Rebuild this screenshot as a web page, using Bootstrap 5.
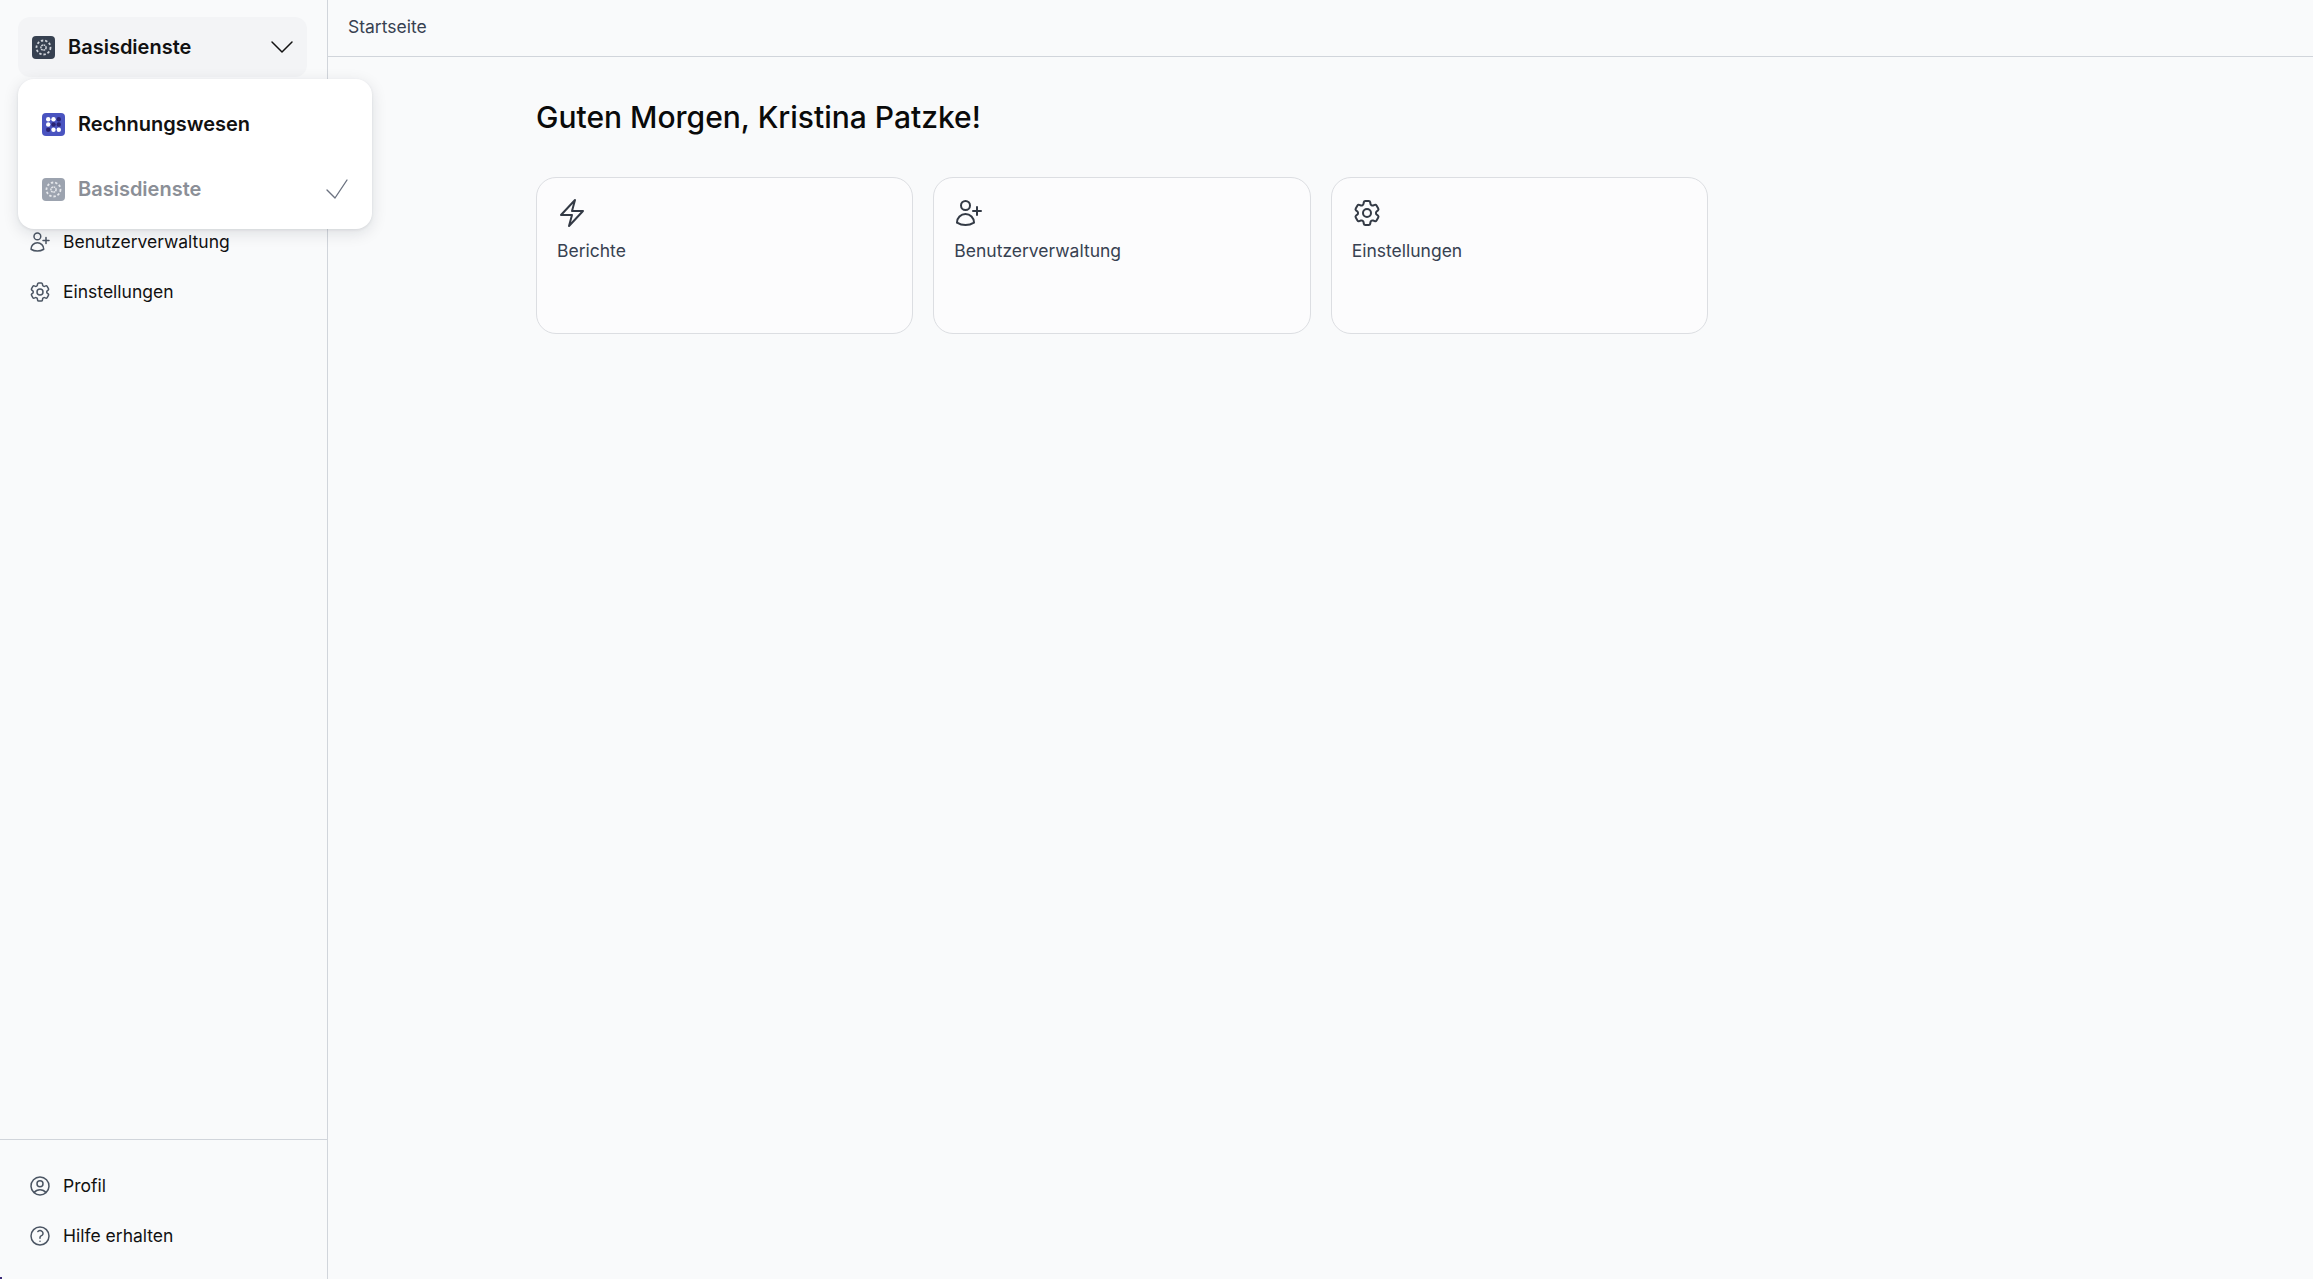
<!DOCTYPE html>
<html lang="de">
<head>
  <meta charset="UTF-8" />
  <meta name="viewport" content="width=device-width, initial-scale=1" />
  <title>Startseite</title>
  <link href="https://cdn.jsdelivr.net/npm/bootstrap@5.3.0/dist/css/bootstrap.min.css" rel="stylesheet" />
  <style>
    body {
      background-color: #f9fafb;
      font-family: Inter, "Liberation Sans", sans-serif;
      color: #111;
      height: 1279px;
      overflow: hidden;
    }
    .line-icon {
      fill: none;
      stroke: currentColor;
      stroke-width: 1.5;
      stroke-linecap: round;
      stroke-linejoin: round;
      flex: none;
    }
    .app-side {
      width: 328px;
      height: 1279px;
      border-right: 1px solid #d1d5db;
    }
    .side-top {
      padding: 17px 20px 0 18px;
    }
    .app-switch {
      height: 60px;
      width: 289px;
      background-color: #f3f4f6;
      border-radius: 12px;
      padding: 0 9px 0 14px;
      font-size: 20px;
      font-weight: 600;
    }
    .app-switch .line-icon {
      stroke-width: 1.1;
    }
    .switch-label {
      gap: 13px;
    }
    .app-tile {
      width: 23px;
      height: 23px;
      border-radius: 4px;
      flex: none;
    }
    .tile-dark { background-color: #374151; }
    .tile-blue { background-color: #4a54c0; }
    .tile-grey { background-color: #9ca3af; }
    .app-menu {
      position: absolute;
      top: 79px;
      left: 18px;
      width: 354px;
      height: 150px;
      background-color: #fff;
      border-radius: 16px;
      box-shadow: 0 4px 16px rgba(17, 24, 39, .12), 0 1px 3px rgba(17, 24, 39, .08);
      z-index: 10;
      padding: 14px 0;
    }
    .app-option {
      height: 62px;
      padding: 0 19px 0 24px;
      margin-bottom: 3px;
      font-size: 20px;
      font-weight: 600;
      gap: 13px;
    }
    .app-option.is-active { color: #8b8f97; }
    .app-option .line-icon {
      stroke-width: 1;
      color: #6b7280;
    }
    .side-nav {
      padding: 140px 12px 0 28px;
    }
    .side-link {
      height: 50px;
      gap: 11px;
      font-size: 17.5px;
      color: #111;
      text-decoration: none;
    }
    .side-link .line-icon {
      color: #4b5563;
    }
    .side-foot {
      border-top: 1px solid #d1d5db;
      padding-top: 21px;
      height: 140px;
    }
    .top-bar {
      height: 57px;
      border-bottom: 1px solid #d1d5db;
      padding: 0 0 2px 20px;
      font-size: 17.5px;
      color: #374151;
    }
    .home-body {
      padding: 41px 0 0 208px;
    }
    .home-title {
      font-size: 30px;
      font-weight: 500;
      line-height: 38px;
      margin-bottom: 41px;
      color: #0a0a0a;
    }
    .tile-row {
      gap: 20px;
    }
    .home-tile {
      width: 377.33px;
      height: 157px;
      background-color: #fcfcfd;
      border: 1px solid #dcdee2;
      border-radius: 20px;
      padding: 19px 20px;
      font-size: 17.5px;
      color: #374151;
    }
    .home-tile .line-icon {
      display: block;
      color: #333a45;
      margin: 0 0 9px -1px;
    }
    .corner-dot {
      position: fixed;
      left: 0;
      bottom: 0;
      width: 2px;
      height: 2px;
      background-color: #3b2a7a;
    }
  </style>
</head>
<body>
  <svg width="0" height="0" class="position-absolute">
    <symbol id="i-bolt" viewBox="0 0 24 24"><path d="m3.75 13.5 10.5-11.25L12 10.5h8.25L9.75 21.75 12 13.5H3.75Z"/></symbol>
    <symbol id="i-user-plus" viewBox="0 0 24 24"><path d="M18 7.5v3m0 0v3m0-3h3m-3 0h-3m-2.25-4.125a3.375 3.375 0 1 1-6.75 0 3.375 3.375 0 0 1 6.75 0ZM3 19.235v-.11a6.375 6.375 0 0 1 12.75 0v.109A12.318 12.318 0 0 1 9.374 21c-2.331 0-4.512-.645-6.374-1.766Z"/></symbol>
    <symbol id="i-cog" viewBox="0 0 24 24"><path d="M9.594 3.94c.09-.542.56-.94 1.11-.94h2.593c.55 0 1.02.398 1.11.94l.213 1.281c.063.374.313.686.645.87.074.04.147.083.22.127.325.196.72.257 1.075.124l1.217-.456a1.125 1.125 0 0 1 1.37.49l1.296 2.247a1.125 1.125 0 0 1-.26 1.431l-1.003.827c-.293.241-.438.613-.43.992a7.723 7.723 0 0 1 0 .255c-.008.378.137.75.43.991l1.004.827c.424.35.534.955.26 1.43l-1.298 2.247a1.125 1.125 0 0 1-1.369.491l-1.217-.456c-.355-.133-.75-.072-1.076.124a6.47 6.47 0 0 1-.22.128c-.331.183-.581.495-.644.869l-.213 1.281c-.09.543-.56.94-1.11.94h-2.594c-.55 0-1.019-.398-1.11-.94l-.213-1.281c-.062-.374-.312-.686-.644-.87a6.52 6.52 0 0 1-.22-.127c-.325-.196-.72-.257-1.076-.124l-1.217.456a1.125 1.125 0 0 1-1.369-.49l-1.297-2.247a1.125 1.125 0 0 1 .26-1.431l1.004-.827c.292-.24.437-.613.43-.991a6.932 6.932 0 0 1 0-.255c.007-.38-.138-.751-.43-.992l-1.004-.827a1.125 1.125 0 0 1-.26-1.43l1.297-2.247a1.125 1.125 0 0 1 1.37-.491l1.216.456c.356.133.751.072 1.076-.124.072-.044.146-.086.22-.128.332-.183.582-.495.644-.869l.214-1.28Z"/><path d="M15 12a3 3 0 1 1-6 0 3 3 0 0 1 6 0Z"/></symbol>
    <symbol id="i-ring" viewBox="0 0 17 17"><circle cx="8.5" cy="8.5" r="7" stroke-width="1.8" stroke-dasharray="2.4 1.9"/><circle cx="8.5" cy="8.5" r="2.6" stroke-width="1.5" stroke-dasharray="1.8 .6"/></symbol>
  </svg>

  <div class="d-flex">
    <aside class="app-side d-flex flex-column position-relative">
      <div class="side-top">
        <div class="app-switch d-flex align-items-center justify-content-between">
          <span class="switch-label d-flex align-items-center">
            <span class="app-tile tile-dark d-flex align-items-center justify-content-center">
              <svg width="17" height="17" fill="none" stroke="#cfd3da"><use href="#i-ring"/></svg>
            </span>
            Basisdienste
          </span>
          <svg class="line-icon" width="32" height="32" viewBox="0 0 24 24"><path d="m19.5 8.25-7.5 7.5-7.5-7.5"/></svg>
        </div>
      </div>

      <div class="app-menu">
        <div class="app-option d-flex align-items-center">
          <span class="app-tile tile-blue d-flex align-items-center justify-content-center">
            <svg width="15" height="15" viewBox="0 0 15 15"><g fill="#fff"><circle cx="2.2" cy="2.2" r="2.2"/><circle cx="7.5" cy="2.2" r="2.2"/><circle cx="2.2" cy="7.5" r="2.2"/><circle cx="12.8" cy="12.8" r="2.2"/><circle cx="7.5" cy="12.8" r="2.2"/></g><g fill="#2a2373"><circle cx="12.8" cy="2.2" r="2.2"/><circle cx="7.5" cy="7.5" r="2.2"/><circle cx="12.8" cy="7.5" r="2.2"/><circle cx="2.2" cy="12.8" r="2.2"/></g></svg>
          </span>
          Rechnungswesen
        </div>
        <div class="app-option is-active d-flex align-items-center">
          <span class="app-tile tile-grey d-flex align-items-center justify-content-center">
            <svg width="17" height="17" fill="none" stroke="#e5e7eb"><use href="#i-ring"/></svg>
          </span>
          <span class="flex-grow-1">Basisdienste</span>
          <svg class="line-icon" width="32" height="32" viewBox="0 0 24 24"><path d="m4.5 12.750 6 6 9-13.500"/></svg>
        </div>
      </div>

      <nav class="side-nav flex-grow-1">
        <a class="side-link d-flex align-items-center" href="#">
          <svg class="line-icon" width="24" height="24"><use href="#i-user-plus"/></svg>
          Benutzerverwaltung
        </a>
        <a class="side-link d-flex align-items-center" href="#">
          <svg class="line-icon" width="24" height="24"><use href="#i-cog"/></svg>
          Einstellungen
        </a>
      </nav>

      <div class="side-foot side-nav">
        <a class="side-link d-flex align-items-center" href="#">
          <svg class="line-icon" width="24" height="24" viewBox="0 0 24 24"><path d="M17.982 18.725A7.488 7.488 0 0 0 12 15.750a7.488 7.488 0 0 0-5.982 2.975m11.963 0a9 9 0 1 0-11.963 0m11.963 0A8.966 8.966 0 0 1 12 21a8.966 8.966 0 0 1-5.982-2.275M15 9.750a3 3 0 1 1-6 0 3 3 0 0 1 6 0Z"/></svg>
          Profil
        </a>
        <a class="side-link d-flex align-items-center" href="#">
          <svg class="line-icon" width="24" height="24" viewBox="0 0 24 24"><path d="M9.879 7.519c1.171-1.025 3.071-1.025 4.242 0 1.172 1.025 1.172 2.687 0 3.712-.203.179-.43.326-.67.442-.745.361-1.450.999-1.450 1.827v.750M21 12a9 9 0 1 1-18 0 9 9 0 0 1 18 0Zm-9 5.250h.008v.008H12v-.008Z"/></svg>
          Hilfe erhalten
        </a>
      </div>
    </aside>

    <main class="flex-grow-1">
      <div class="top-bar d-flex align-items-center">Startseite</div>
      <div class="home-body">
        <h1 class="home-title">Guten Morgen, Kristina Patzke!</h1>
        <div class="tile-row d-flex">
          <div class="home-tile">
            <svg class="line-icon" width="32" height="32"><use href="#i-bolt"/></svg>
            Berichte
          </div>
          <div class="home-tile">
            <svg class="line-icon" width="32" height="32"><use href="#i-user-plus"/></svg>
            Benutzerverwaltung
          </div>
          <div class="home-tile">
            <svg class="line-icon" width="32" height="32"><use href="#i-cog"/></svg>
            Einstellungen
          </div>
        </div>
      </div>
    </main>
  </div>
  <span class="corner-dot"></span>

  <script src="https://cdn.jsdelivr.net/npm/bootstrap@5.3.0/dist/js/bootstrap.bundle.min.js"></script>
</body>
</html>
